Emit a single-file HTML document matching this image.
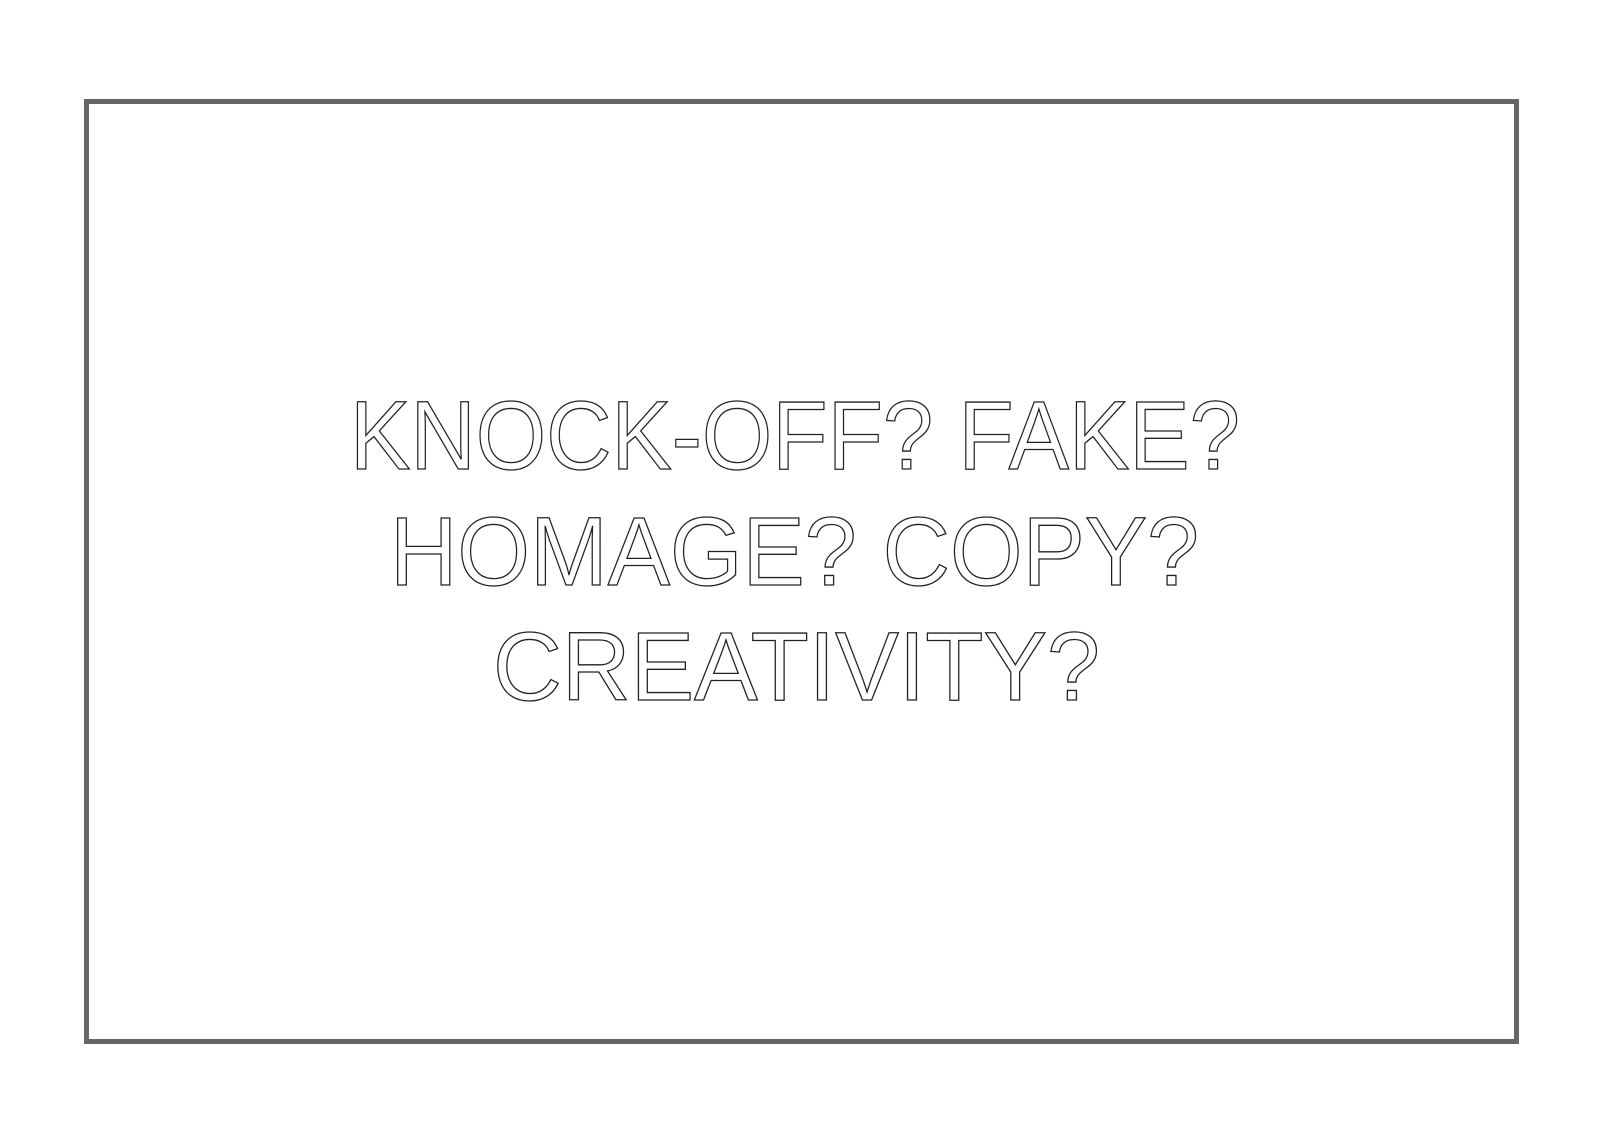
<!DOCTYPE html>
<html><head><meta charset="utf-8"><style>
html,body{margin:0;padding:0;background:#fff;width:1600px;height:1131px;overflow:hidden}
</style></head><body>
<svg width="1600" height="1131" xmlns="http://www.w3.org/2000/svg">
<rect x="0" y="0" width="1600" height="1131" fill="#fff"/>
<rect x="86.5" y="101.5" width="1430" height="940" fill="none" stroke="#666" stroke-width="5"/>
<g font-family="Liberation Sans, sans-serif" font-size="97" fill="none" stroke="#222" stroke-width="1.3">
<text x="350" y="469" textLength="890" lengthAdjust="spacingAndGlyphs">KNOCK-OFF? FAKE?</text>
<text x="390" y="585" textLength="809" lengthAdjust="spacingAndGlyphs">HOMAGE? COPY?</text>
<text x="493" y="700" textLength="607" lengthAdjust="spacingAndGlyphs">CREATIVITY?</text>
</g>
</svg>
</body></html>
